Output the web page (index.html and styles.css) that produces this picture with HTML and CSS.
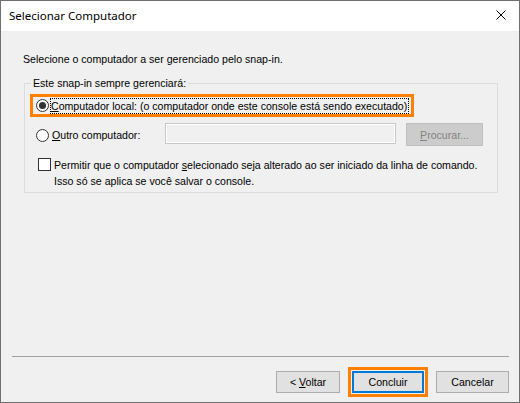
FILE: index.html
```html
<!DOCTYPE html>
<html lang="pt-BR">

<head>
    <meta charset="UTF-8">
    <title>Selecionar Computador</title>
    <link rel="stylesheet" href="styles.css">
</head>

<body>
    <div class="window">
        <div class="titlebar">
            <span class="title">Selecionar Computador</span>
            <svg class="close" width="10" height="10" viewBox="0 0 10 10">
                <path d="M0.5 0.5 L9.5 9.5 M9.5 0.5 L0.5 9.5" stroke="#000" stroke-width="1" fill="none"/>
            </svg>
        </div>

        <div class="content">
            <p class="intro">Selecione o computador a ser gerenciado pelo snap-in.</p>

            <fieldset class="group">
                <legend>Este snap-in sempre gerenciará:</legend>

                <div class="highlight">
                    <span class="radio checked"></span>
                    <span class="focus-label"><u>C</u>omputador local: (o computador onde este console está sendo executado)</span>
                </div>

                <div class="row-other">
                    <span class="radio"></span>
                    <span class="other-label"><u>O</u>utro computador:</span>
                    <span class="text-input"></span>
                    <span class="btn-disabled"><u>P</u>rocurar...</span>
                </div>

                <div class="row-check">
                    <span class="checkbox"></span>
                    <span class="check-label">Permitir que o computador <u>s</u>elecionado seja alterado ao ser iniciado da linha de comando.<br>Isso só se aplica se você salvar o console.</span>
                </div>
            </fieldset>

            <div class="footer">
                <hr class="separator">
                <div class="buttons">
                    <button class="btn btn-back">&lt; <u>V</u>oltar</button>
                    <span class="btn-ring"><button class="btn btn-default">Concluir</button></span>
                    <button class="btn">Cancelar</button>
                </div>
            </div>
        </div>
    </div>
</body>

</html>
```

FILE: styles.css
```css
html,
body {
    margin: 0;
    padding: 0;
}

body {
    font-family: 'Liberation Sans', Arial, sans-serif;
    font-size: 10.6px;
    color: #000;
    background-color: #f0f0f0;
}

.window {
    box-sizing: border-box;
    width: 520px;
    height: 403px;
    border: 1px solid #707070;
    display: flex;
    flex-direction: column;
    background-color: #f0f0f0;
}

.titlebar {
    height: 30px;
    background-color: #fff;
    display: flex;
    align-items: center;
    justify-content: space-between;
    padding: 0 13px 0 8px;
}

.title {
    font-family: 'Noto Sans', sans-serif;
    font-size: 11.5px;
    margin-top: -1px;
}

.close {
    display: block;
    margin-top: -2px;
}

.content {
    flex: 1;
    display: flex;
    flex-direction: column;
    padding: 22px 0 0 0;
}

.intro {
    margin: 0 0 0 22px;
    line-height: 13px;
}

.group {
    margin: 11px 0 0 23px;
    width: 474px;
    box-sizing: border-box;
    height: 116px;
    border: 1px solid #dcdcdc;
    padding: 0 0 0 5px;
    min-width: 0;
}

.group legend {
    padding: 0 2px;
    margin-left: 1px;
    line-height: 13px;
}

.highlight {
    margin-top: 4px;
    width: 384px;
    height: 23px;
    box-sizing: border-box;
    border: 3px solid #ff8000;
    display: flex;
    align-items: center;
    padding-left: 3px;
}

.radio {
    box-sizing: border-box;
    width: 13px;
    height: 13px;
    border: 1px solid #333;
    border-radius: 50%;
    background-color: #fff;
    display: flex;
    align-items: center;
    justify-content: center;
    flex: none;
}

.radio.checked::after {
    content: "";
    width: 7px;
    height: 7px;
    border-radius: 50%;
    background-color: #333;
}

.focus-label {
    margin-left: 2px;
    outline: 1px dotted #000;
    line-height: 14px;
    padding: 0 1px 0 0;
    white-space: nowrap;
}

.row-other {
    display: flex;
    align-items: center;
    margin-top: 6px;
    padding-left: 6px;
    height: 24px;
}

.other-label {
    margin-left: 3px;
    width: 113px;
}

.text-input {
    box-sizing: border-box;
    width: 231px;
    height: 21px;
    border: 1px solid #c8c8c8;
    box-shadow: inset 0 0 0 1px #fff;
    background-color: #f0f0f0;
    align-self: flex-start;
}

.btn-disabled {
    box-sizing: border-box;
    width: 77px;
    height: 23px;
    margin-left: 10px;
    background-color: #cccccc;
    border: 1px solid #bfbfbf;
    color: #838383;
    display: flex;
    align-items: center;
    justify-content: center;
    align-self: flex-start;
}

.row-check {
    display: flex;
    align-items: flex-start;
    margin-top: 10px;
    padding-left: 8px;
}

.checkbox {
    box-sizing: border-box;
    width: 13px;
    height: 13px;
    border: 1px solid #333;
    background-color: #fff;
    margin-top: 1px;
    flex: none;
}

.check-label {
    margin-left: 3px;
    line-height: 16px;
    margin-top: 0;
}

.footer {
    margin-top: auto;
    padding-bottom: 5px;
}

.separator {
    margin: 0 10px 0 11px;
    border: none;
    border-top: 1px solid #a0a0a0;
    height: 0;
}

.buttons {
    display: flex;
    justify-content: flex-end;
    align-items: center;
    gap: 8px;
    padding-right: 10px;
    margin-top: 10px;
}

.btn {
    box-sizing: border-box;
    width: 73px;
    height: 22px;
    font-family: 'Liberation Sans', Arial, sans-serif;
    font-size: 10.6px;
    color: #000;
    background-color: #e1e1e1;
    border: 1px solid #adadad;
    padding: 0;
    margin: 0;
}

.btn-back {
    width: 64px;
}

.btn-ring {
    display: flex;
    border: 3px solid #ff8000;
    padding: 1px;
}

.btn-default {
    width: 72px;
    border: 2px solid #0078d7;
}
```
